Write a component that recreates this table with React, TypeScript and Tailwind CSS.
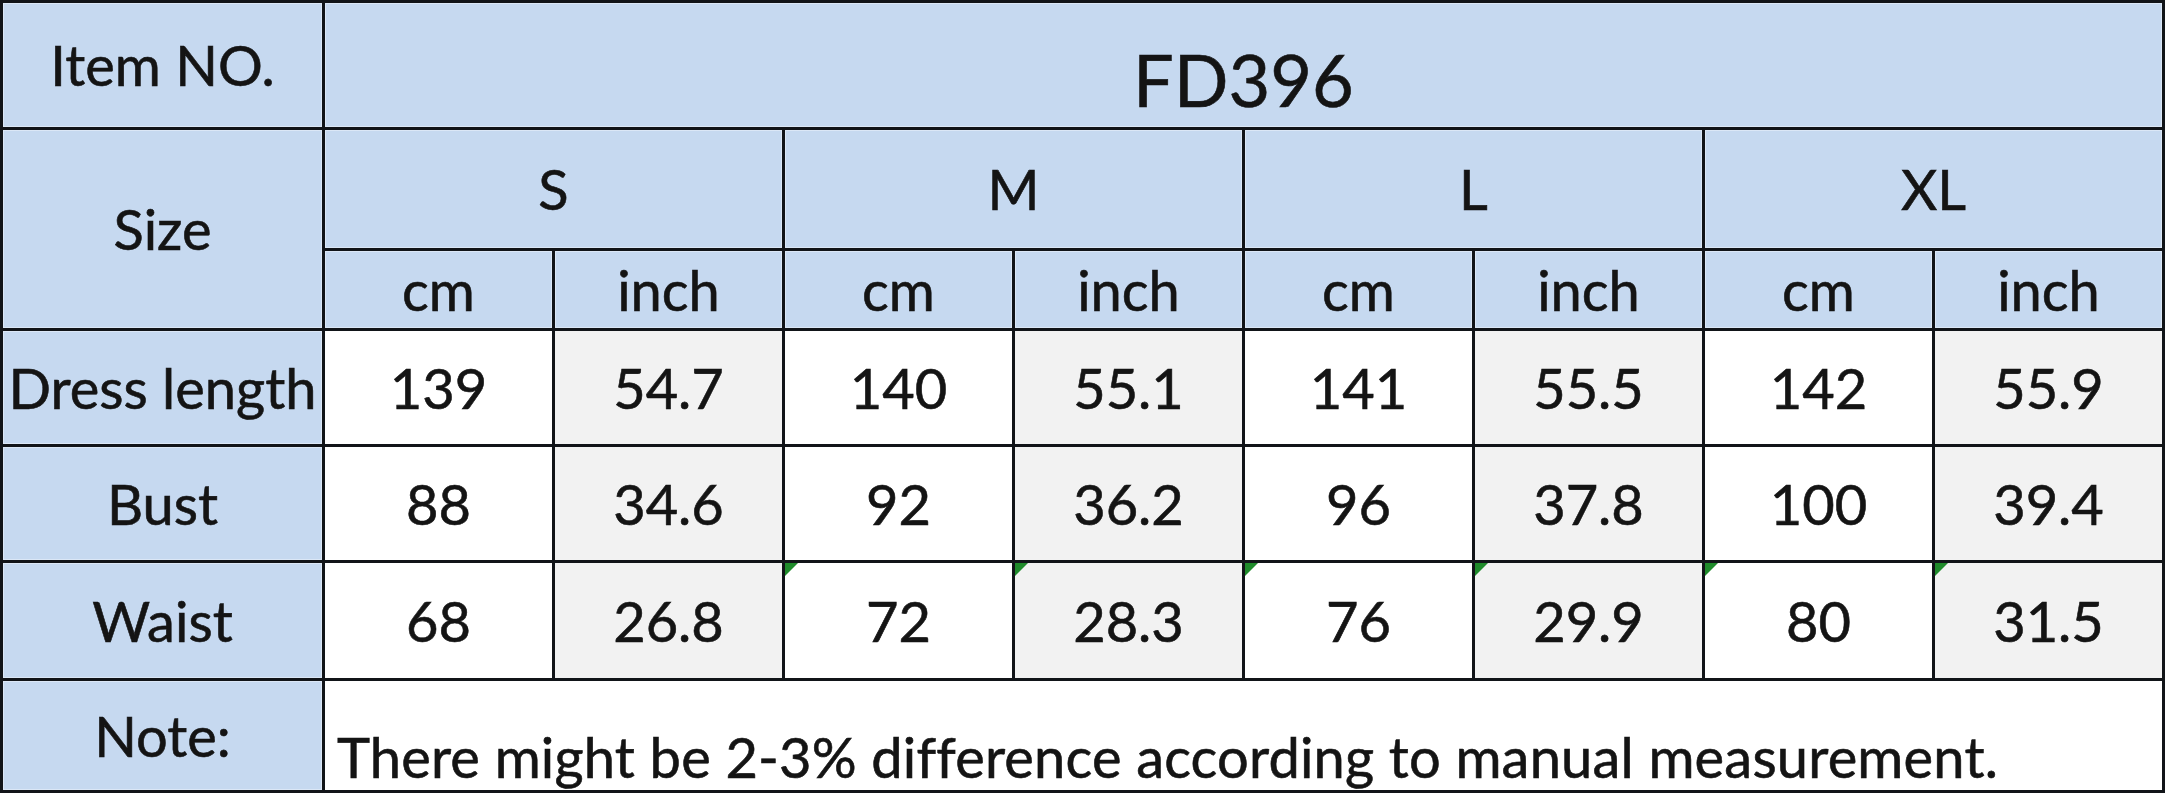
import React from "react";

const sizes = ["S", "M", "L", "XL"];

const rows = [
  { label: "Dress length", values: ["139", "54.7", "140", "55.1", "141", "55.5", "142", "55.9"] },
  { label: "Bust", values: ["88", "34.6", "92", "36.2", "96", "37.8", "100", "39.4"] },
  { label: "Waist", values: ["68", "26.8", "72", "28.3", "76", "29.9", "80", "31.5"], flagFrom: 2 },
];

const blue = "bg-[#c6d9f0] shadow-[inset_0_0_0_1px_#dbe7f6]";
const cell = "flex items-center justify-center whitespace-nowrap";

function Flag() {
  // excel's little green error marker
  return (
    <svg className="absolute left-0 top-0" width="13" height="13" viewBox="0 0 13 13" aria-hidden>
      <polygon points="0,0 13,0 0,13" fill="#1f8a2b" />
    </svg>
  );
}

export default function App() {
  return (
    <div className="min-h-screen bg-white font-[Lato,sans-serif] text-[56px] leading-[1.2] text-[#141414] [-webkit-text-stroke:0.6px_#141414]">
      <div className="grid w-fit grid-cols-[319px_repeat(8,227px)] grid-rows-[124px_118px_77px_113px_113px_115px_109px] gap-[3px] bg-[#111418] p-[3px]">
        <div className={`${cell} ${blue}`}>Item NO.</div>
        <div className={`col-span-8 flex items-end justify-center pb-[5px] text-[72px] ${blue}`}>FD396</div>

        <div className={`row-span-2 ${cell} ${blue}`}>Size</div>
        {sizes.map((s) => (
          <div key={s} className={`col-span-2 ${cell} ${blue}`}>
            {s}
          </div>
        ))}
        {sizes.map((s) => (
          <React.Fragment key={s + "-u"}>
            <div className={`${cell} ${blue}`}>cm</div>
            <div className={`${cell} ${blue}`}>inch</div>
          </React.Fragment>
        ))}

        {rows.map((r) => (
          <React.Fragment key={r.label}>
            <div className={`${cell} ${blue}`}>{r.label}</div>
            {r.values.map((v, i) => (
              <div
                key={i}
                className={`relative ${cell} ${i % 2 === 0 ? "bg-white" : "bg-[#f2f2f2]"}`}
              >
                {r.flagFrom !== undefined && i >= r.flagFrom && <Flag />}
                {v}
              </div>
            ))}
          </React.Fragment>
        ))}

        <div className={`${cell} ${blue}`}>Note:</div>
        <div className="col-span-8 flex items-end bg-white pl-[12px] tracking-[0.18px] whitespace-nowrap">
          There might be 2-3% difference according to manual measurement.
        </div>
      </div>
    </div>
  );
}
